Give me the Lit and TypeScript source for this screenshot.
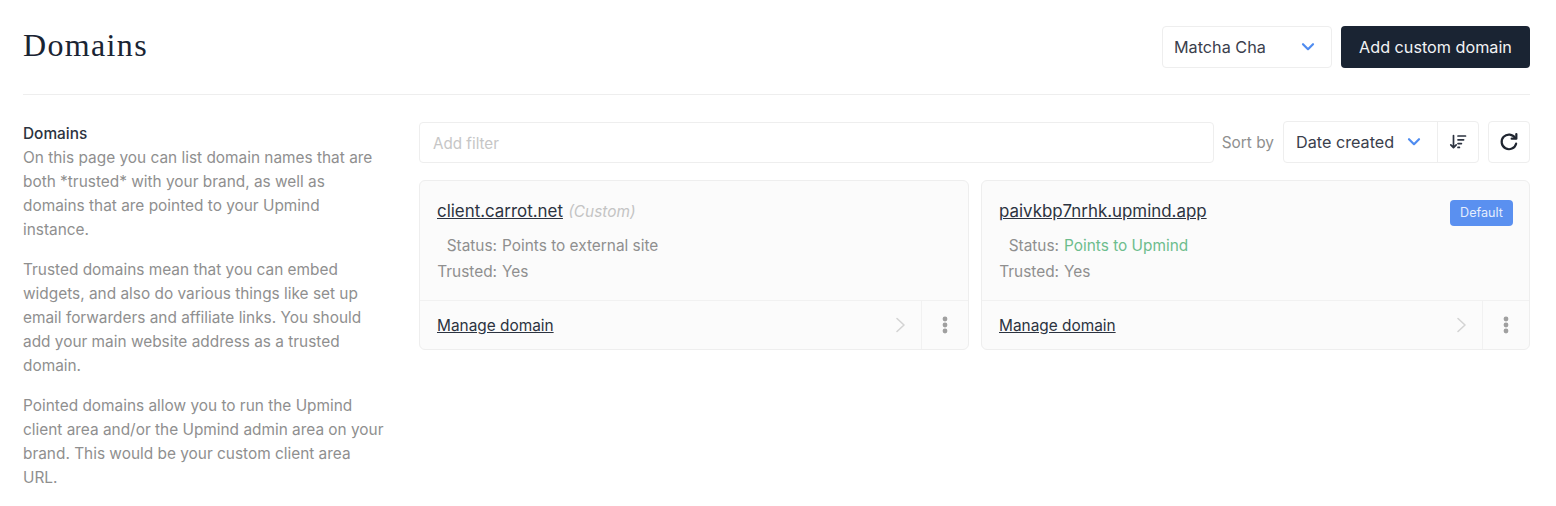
import {LitElement, html, css} from 'lit';
import {customElement} from 'lit/decorators.js';

const chevron = html`<svg class="chev" width="14" height="10" viewBox="0 0 14 10" fill="none"><path d="M2 2.2l5 5 5-5" stroke="#4f8cf0" stroke-width="2.2" stroke-linecap="round" stroke-linejoin="round"/></svg>`;

interface Domain {
  name: string;
  custom?: boolean;
  status: string;
  ok?: boolean;
  isDefault?: boolean;
}

const domains: Domain[] = [
  {name: 'client.carrot.net', custom: true, status: 'Points to external site'},
  {name: 'paivkbp7nrhk.upmind.app', status: 'Points to Upmind', ok: true, isDefault: true},
];

@customElement('app-root')
export class AppRoot extends LitElement {
  static styles = css`
    :host {
      display: block;
      height: 506px;
      box-sizing: border-box;
      padding: 26px 26px 0 23px;
      background: #fff;
      font-family: Inter, 'Liberation Sans', sans-serif;
      font-size: 15.2px;
      color: #2c3340;
      overflow: hidden;
    }
    .top {
      display: flex;
      align-items: center;
      height: 42px;
      gap: 9px;
      padding-bottom: 26px;
      border-bottom: 1px solid #eeeeee;
    }
    h1 {
      margin: -4px auto 0 0;
      font-family: 'Liberation Serif', serif;
      font-weight: 400;
      font-size: 32px;
      letter-spacing: 1.35px;
      color: #1a2433;
    }
    .select {
      box-sizing: border-box;
      display: flex;
      align-items: center;
      justify-content: space-between;
      width: 170px;
      height: 42px;
      padding: 0 16px 0 11px;
      border: 1px solid #eeeeee;
      border-radius: 4px;
      font-size: 16.2px;
      color: #3a404c;
    }
    .cta {
      box-sizing: border-box;
      width: 189px;
      height: 42px;
      border: none;
      border-radius: 4px;
      background: #1a2433;
      color: #f2f3f5;
      font: inherit;
      font-size: 16.2px;
    }
    .body {
      display: flex;
      padding-top: 26px;
    }
    aside {
      flex: 0 0 396px;
      box-sizing: border-box;
      padding: 1px 35px 0 0;
      color: #8f8f8f;
      font-size: 15.4px;
      line-height: 24px;
    }
    aside h2 {
      margin: 0;
      font-size: 15.4px;
      font-weight: 500;
      line-height: 24px;
      color: #2c3340;
    }
    aside p {
      margin: 0 0 16px;
    }
    main {
      flex: 1;
      min-width: 0;
    }
    .tools {
      display: flex;
      align-items: center;
      height: 42px;
    }
    .filter {
      box-sizing: border-box;
      flex: 1;
      height: 41px;
      display: flex;
      align-items: center;
      padding: 2px 0 0 13px;
      border: 1px solid #eeeeee;
      border-radius: 4px;
      color: #c6c6c6;
    }
    .sortby {
      margin: 0 9px 0 8px;
      color: #8f8f8f;
      font-size: 15.4px;
    }
    .sort {
      box-sizing: border-box;
      display: flex;
      width: 196px;
      height: 42px;
      border: 1px solid #eeeeee;
      border-radius: 4px;
    }
    .sort-label {
      flex: 1;
      display: flex;
      align-items: center;
      justify-content: space-between;
      padding: 0 16px 0 12px;
      font-size: 16.2px;
      color: #3a404c;
    }
    .sort-dir {
      width: 40px;
      display: flex;
      align-items: center;
      justify-content: center;
      border-left: 1px solid #eeeeee;
    }
    .refresh {
      box-sizing: border-box;
      width: 42px;
      height: 42px;
      margin-left: 9px;
      display: flex;
      align-items: center;
      justify-content: center;
      border: 1px solid #eeeeee;
      border-radius: 4px;
    }
    .cards {
      display: grid;
      grid-template-columns: 550px 549px;
      gap: 12px;
      margin-top: 17px;
    }
    .card {
      box-sizing: border-box;
      height: 170px;
      display: flex;
      flex-direction: column;
      border: 1px solid #eeeeee;
      border-radius: 6px;
      background: #fbfbfb;
    }
    .info {
      flex: 1;
      padding: 19px 16px 0 17px;
    }
    .head {
      display: flex;
      align-items: flex-start;
      justify-content: space-between;
      height: 33px;
    }
    .name {
      font-size: 16.9px;
      line-height: 22px;
      color: #2c3340;
      text-decoration: underline;
    }
    .custom {
      margin-left: 1px;
      font-style: italic;
      font-size: 15.4px;
      color: #c4c4c4;
    }
    .badge {
      box-sizing: border-box;
      width: 63px;
      height: 26px;
      line-height: 26px;
      text-align: center;
      border-radius: 4px;
      background: #5a90f0;
      color: #e4edfd;
      font-size: 12.6px;
    }
    .row {
      display: flex;
      gap: 5px;
      line-height: 26px;
      font-size: 15.4px;
      color: #8f8f8f;
    }
    .row .key {
      width: 60px;
      text-align: right;
      white-space: nowrap;
    }
    .good {
      color: #6dbd8d;
    }
    .foot {
      display: flex;
      align-items: stretch;
      height: 48px;
      border-top: 1px solid #f1f1f1;
    }
    .manage {
      flex: 1;
      display: flex;
      align-items: center;
      justify-content: space-between;
      padding: 0 14px 0 17px;
      font-size: 15.4px;
    }
    .manage span {
      text-decoration: underline;
    }
    .more {
      width: 46px;
      display: flex;
      align-items: center;
      justify-content: center;
      border-left: 1px solid #f1f1f1;
    }
  `;

  _card(d: Domain) {
    return html`
      <div class="card">
        <div class="info">
          <div class="head">
            <div>
              <span class="name">${d.name}</span>
              ${d.custom ? html`<span class="custom">(Custom)</span>` : ''}
            </div>
            ${d.isDefault ? html`<div class="badge">Default</div>` : ''}
          </div>
          <div class="row">
            <span class="key">Status:</span>
            <span class=${d.ok ? 'good' : ''}>${d.status}</span>
          </div>
          <div class="row">
            <span class="key">Trusted:</span>
            <span>Yes</span>
          </div>
        </div>
        <div class="foot">
          <div class="manage">
            <span>Manage domain</span>
            <svg width="12" height="16" viewBox="0 0 12 16" fill="none"><path d="M2 1.5L9 8l-7 6.5" stroke="#d4d4d4" stroke-width="1.6" stroke-linecap="round" stroke-linejoin="round"/></svg>
          </div>
          <div class="more">
            <svg width="6" height="18" viewBox="0 0 6 18" fill="#a0a0a0"><circle cx="3" cy="3" r="2.4"/><circle cx="3" cy="9" r="2.4"/><circle cx="3" cy="15" r="2.4"/></svg>
          </div>
        </div>
      </div>
    `;
  }

  render() {
    return html`
      <div class="top">
        <h1>Domains</h1>
        <div class="select">Matcha Cha ${chevron}</div>
        <button class="cta">Add custom domain</button>
      </div>
      <div class="body">
        <aside>
          <h2>Domains</h2>
          <p>On this page you can list domain names that are both *trusted* with your brand, as well as domains that are pointed to your Upmind instance.</p>
          <p>Trusted domains mean that you can embed widgets, and also do various things like set up email forwarders and affiliate links. You should add your main website address as a trusted domain.</p>
          <p>Pointed domains allow you to run the Upmind client area and/or the Upmind admin area on your brand. This would be your custom client area URL.</p>
        </aside>
        <main>
          <div class="tools">
            <div class="filter">Add filter</div>
            <span class="sortby">Sort by</span>
            <div class="sort">
              <div class="sort-label">Date created ${chevron}</div>
              <div class="sort-dir">
                <svg width="18" height="18" viewBox="0 0 18 18" fill="none" stroke="#2c3340" stroke-width="1.7" stroke-linecap="round" stroke-linejoin="round"><path d="M4.5 2.5v12M1.8 11.8l2.7 2.9 2.7-2.9"/><path d="M9 3h7.5M9 6.8h5.6M9 10.6h3.4M9 14.4h1.4"/></svg>
              </div>
            </div>
            <div class="refresh">
              <svg width="20" height="20" viewBox="0 0 18 18" fill="none" stroke="#1f2530" stroke-width="2" stroke-linecap="round" stroke-linejoin="round"><path d="M14.6 5.4A6.6 6.6 0 1 0 15.4 10.5"/><path d="M15.6 1.8v4.2h-4.2"/></svg>
            </div>
          </div>
          <div class="cards">${domains.map((d) => this._card(d))}</div>
        </main>
      </div>
    `;
  }
}
